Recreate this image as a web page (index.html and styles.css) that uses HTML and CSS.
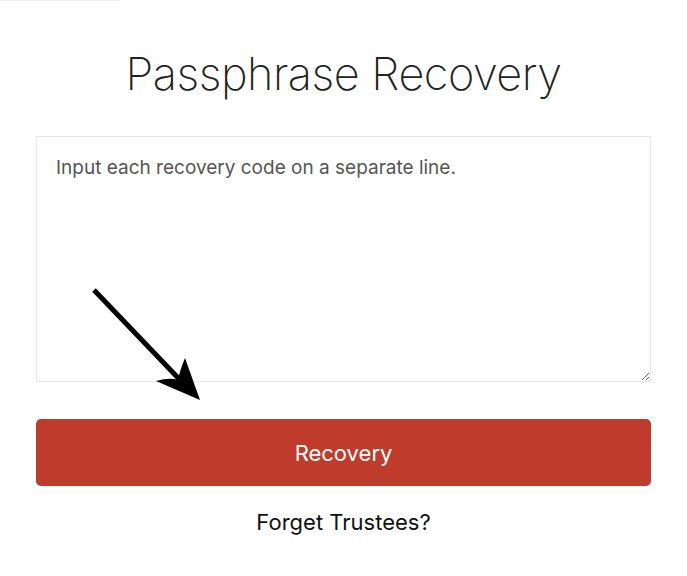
FILE: index.html
```html
<!DOCTYPE html>
<html lang="en">
<head>
    <meta charset="UTF-8">
    <meta name="viewport" content="width=device-width, initial-scale=1.0">
    <title>Passphrase Recovery</title>
    <link rel="stylesheet" href="styles.css">
</head>
<body>
    <div class="top-rule"></div>
    <h1>Passphrase Recovery</h1>

    <form id="recovery-form" class="recovery-form">
        <div class="field">
            <textarea id="recovery-codes" placeholder="Input each recovery code on a separate line."></textarea>
            <svg class="arrow" width="120" height="120" viewBox="0 0 120 120">
                <line x1="4" y1="4" x2="92" y2="96" stroke="#000" stroke-width="5"/>
                <path d="M110 114 L66 95 Q80 91 88 94 Q90 84 95 72 Z" fill="#000"/>
            </svg>
        </div>
        <button type="submit" class="recovery-button">Recovery</button>
        <a href="#" class="forget-link">Forget Trustees?</a>
    </form>
</body>
</html>
```

FILE: styles.css
```css
body {
    font-family: Inter, "Open Sans", sans-serif;
    background-color: #fff;
    margin: 0;
    padding: 0;
}
.top-rule {
    width: 120px;
    height: 1px;
    background-color: #f0f0f0;
}
h1 {
    font-weight: 200;
    font-size: 45px;
    color: #222;
    text-align: center;
    margin: 43px 0 0;
    line-height: 60px;
    letter-spacing: -0.5px;
}
.recovery-form {
    margin: 32px 36px 0;
    display: flex;
    flex-direction: column;
    align-items: center;
}
.field {
    position: relative;
    width: 100%;
}
.field textarea {
    display: block;
    box-sizing: border-box;
    width: 100%;
    height: 246px;
    border: 1px solid #e6e6e6;
    padding: 19px 19px;
    font-family: Inter, sans-serif;
    font-size: 19px;
    color: #333;
    resize: vertical;
}
.field textarea::placeholder {
    color: #555;
}
.arrow {
    position: absolute;
    left: 54px;
    top: 150px;
}
.recovery-button {
    width: 100%;
    height: 67px;
    margin-top: 37px;
    background-color: #bf3b2b;
    color: #fff;
    border: none;
    border-radius: 5px;
    font-family: Inter, sans-serif;
    font-size: 22px;
    font-weight: 400;
    cursor: pointer;
}
.forget-link {
    margin-top: 23px;
    font-size: 22px;
    color: #111;
    text-decoration: none;
}
```
